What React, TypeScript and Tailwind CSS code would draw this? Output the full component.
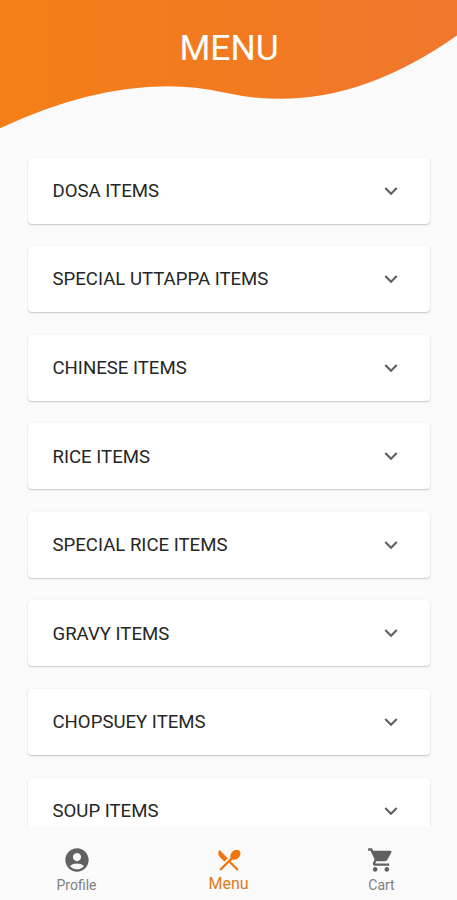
import { MdAccountCircle, MdExpandMore, MdRestaurantMenu, MdShoppingCart } from "react-icons/md";

const categories = [
  "DOSA ITEMS",
  "SPECIAL UTTAPPA ITEMS",
  "CHINESE ITEMS",
  "RICE ITEMS",
  "SPECIAL RICE ITEMS",
  "GRAVY ITEMS",
  "CHOPSUEY ITEMS",
  "SOUP ITEMS",
];

function Header() {
  return (
    <header className="relative h-[157px] shrink-0">
      <svg className="absolute inset-0" width="457" height="130" viewBox="0 0 457 130" aria-hidden="true">
        <defs>
          <linearGradient id="wave" x1="0" y1="0" x2="1" y2="0">
            <stop offset="0" stopColor="#f57f17" />
            <stop offset="0.5" stopColor="#f27a20" />
            <stop offset="1" stopColor="#f0782e" />
          </linearGradient>
        </defs>
        <path d="M0 0V128.3Q125 70 224 92.6Q252 98.8 281 98.8Q367 98.8 457 35.5V0Z" fill="url(#wave)" />
      </svg>
      <h1 className="relative pt-[27px] pl-px text-center text-[35.4px] leading-[42px] font-normal text-white">MENU</h1>
    </header>
  );
}

function CategoryCard({ name }: { name: string }) {
  return (
    <button className="flex h-[66px] w-full shrink-0 items-center justify-between rounded-[4px] bg-white pr-[25.5px] pl-[24.5px] text-left text-[18.6px] text-[#262626] shadow-[0_1px_1.5px_rgba(0,0,0,0.2),0_0_2px_rgba(0,0,0,0.05)]">
      <span className="pt-[2.4px]">{name}</span>
      <MdExpandMore className="size-[26px] text-[#616161]" />
    </button>
  );
}

export default function App() {
  return (
    <div className="flex h-[900px] w-[457px] flex-col overflow-hidden bg-[#fafafa] font-[Roboto,sans-serif]">
      <Header />
      <main className="flex min-h-0 flex-1 flex-col gap-[22.6px] overflow-hidden pt-[0.5px] pr-[27.5px] pl-[28px]">
        {categories.map((name) => (
          <CategoryCard key={name} name={name} />
        ))}
      </main>
      <nav className="grid h-[74px] shrink-0 grid-cols-3 bg-[#fafafa] pt-5 pl-px text-[#808080]">
        <a className="flex flex-col items-center text-[14px] leading-[20px]">
          <MdAccountCircle className="size-7 text-[#616161]" />
          <span className="mt-px pr-px">Profile</span>
        </a>
        <a className="flex flex-col items-center text-[16px] leading-[20px] text-[#dd7a1c]">
          <MdRestaurantMenu className="size-7 text-[#ef750c]" />
          <span className="pr-px">Menu</span>
        </a>
        <a className="flex flex-col items-center text-[14px] leading-[20px]">
          <MdShoppingCart className="size-7 text-[#616161]" />
          <span className="mt-px pl-px">Cart</span>
        </a>
      </nav>
    </div>
  );
}
